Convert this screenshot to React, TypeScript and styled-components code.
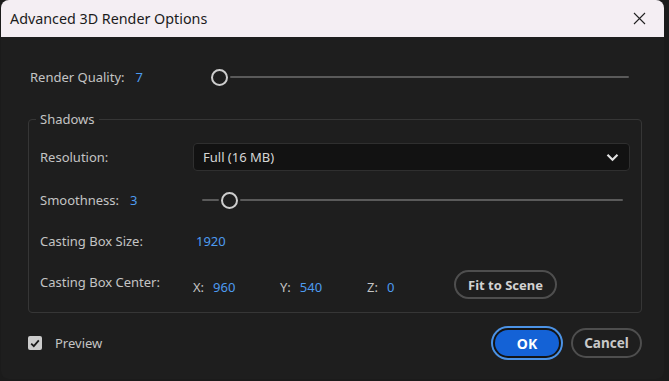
import styled, { createGlobalStyle } from "styled-components";

const GlobalStyle = createGlobalStyle`
  html, body {
    margin: 0;
    background: #1b1b1b;
  }
  * {
    box-sizing: border-box;
  }
`;

const Window = styled.div`
  width: 663px;
  height: 379px;
  margin-left: 1px;
  border-radius: 8px;
  overflow: hidden;
  background: #1e1e1e;
  display: flex;
  flex-direction: column;
  font-family: "Noto Sans", "Open Sans", sans-serif;
`;

const TitleBar = styled.div`
  height: 37px;
  flex-shrink: 0;
  background: #f4eef3;
  display: flex;
  align-items: center;
  justify-content: space-between;
  padding: 0 18px 0 9px;
`;

const Title = styled.span`
  font-size: 14.3px;
  color: #1b1b1b;
`;

const CloseButton = styled.button`
  border: 0;
  background: none;
  padding: 0;
  display: flex;
  color: #222;
`;

const Body = styled.div`
  flex: 1;
  display: flex;
  flex-direction: column;
  padding: 30px 22px 0 27px;
`;

const Label = styled.span`
  font-size: 13px;
  color: #c4c4c4;
  white-space: nowrap;
`;

const Value = styled.span`
  font-size: 13px;
  color: #4d9bf0;
`;

const TopRow = styled.div`
  display: flex;
  align-items: center;
  height: 20px;
`;

const LabelCell = styled.div<{ $w: number; $pl?: number; $gap?: number }>`
  width: ${(p) => p.$w}px;
  flex-shrink: 0;
  display: flex;
  align-items: center;
  gap: ${(p) => p.$gap ?? 10}px;
  padding-left: ${(p) => p.$pl ?? 0}px;
`;

const SliderBox = styled.div<{ $mr?: number }>`
  flex: 1;
  display: flex;
  align-items: center;
  gap: 2px;
  margin-right: ${(p) => p.$mr ?? 0}px;
`;

const Track = styled.div<{ $w?: number }>`
  height: 2px;
  background: #5a5a5a;
  border-radius: 1px;
  ${(p) => (p.$w !== undefined ? `width: ${p.$w}px;` : "flex: 1;")}
`;

const Thumb = styled.div`
  width: 17px;
  height: 17px;
  border-radius: 50%;
  border: 2px solid #cdcdcd;
  background: #1e1e1e;
  flex-shrink: 0;
`;

const Group = styled.fieldset`
  margin: 23px 0 0;
  border: 1px solid #363636;
  border-radius: 4px;
  padding: 15px 11px 13px 11px;
  display: grid;
  grid-template-columns: 153px 1fr;
  align-items: center;
`;

const Legend = styled.legend`
  font-size: 13px;
  color: #c4c4c4;
  padding: 0 4px;
  margin-left: -4px;
`;

const RowLabel = styled(LabelCell)<{ $mt: number; $top?: boolean }>`
  margin-top: ${(p) => p.$mt}px;
  ${(p) => (p.$top ? "align-self: start; padding-top: 3px;" : "")}
`;

const RowControl = styled.div<{ $mt: number; $indent?: number }>`
  margin-top: ${(p) => p.$mt}px;
  padding-left: ${(p) => p.$indent ?? 0}px;
  display: flex;
  align-items: center;
`;

const Select = styled.div`
  flex: 1;
  height: 28px;
  background: #121212;
  border: 1px solid #2f2f2f;
  border-radius: 4px;
  display: flex;
  align-items: center;
  justify-content: space-between;
  padding: 0 10px 0 9px;
  font-size: 13px;
  color: #d6d6d6;
`;

const Coords = styled.div`
  display: grid;
  grid-template-columns: 87px 87px 87px auto;
  align-items: center;
`;

const Coord = styled.div`
  display: flex;
  gap: 9px;
  padding-top: 5px;
`;

const PillButton = styled.button`
  height: 29px;
  padding: 0 12px;
  border-radius: 15px;
  border: 2px solid #4e4e4e;
  background: transparent;
  color: #d2d2d2;
  font-family: inherit;
  font-weight: 700;
  font-size: 13px;
`;

const Footer = styled.div`
  margin-top: 13px;
  height: 34px;
  display: flex;
  align-items: center;
  justify-content: space-between;
`;

const CheckRow = styled.label`
  display: flex;
  align-items: center;
  gap: 13px;
`;

const Box = styled.span`
  width: 14px;
  height: 14px;
  border-radius: 2px;
  background: #cccccc;
  display: flex;
  align-items: center;
  justify-content: center;
`;

const Actions = styled.div`
  display: flex;
  align-items: center;
  gap: 12px;
`;

const OkButton = styled.button`
  width: 64px;
  height: 26px;
  border-radius: 13px;
  border: 0;
  background: #1462d6;
  color: #fff;
  font-family: inherit;
  font-weight: 700;
  font-size: 14px;
  box-shadow: 0 0 0 2px #141414, 0 0 0 4px #4c93e6;
`;

const CancelButton = styled(PillButton)`
  width: 71px;
  height: 30px;
  padding: 0;
  font-size: 13.5px;
  color: #c8c8c8;
`;

const Slider = ({ left, mr }: { left: number; mr?: number }) => (
  <SliderBox $mr={mr}>
    {left > 0 && <Track $w={left} />}
    <Thumb />
    <Track />
  </SliderBox>
);

export default function App() {
  return (
    <>
      <GlobalStyle />
      <Window>
        <TitleBar>
          <Title>Advanced 3D Render Options</Title>
          <CloseButton>
            <svg width="13" height="13" viewBox="0 0 13 13">
              <path d="M1 1L12 12M12 1L1 12" stroke="#222" strokeWidth="1.1" />
            </svg>
          </CloseButton>
        </TitleBar>
        <Body>
          <TopRow>
            <LabelCell $w={183} $pl={2} $gap={11}>
              <Label>Render Quality:</Label>
              <Value>7</Value>
            </LabelCell>
            <Slider left={0} mr={13} />
          </TopRow>

          <Group>
            <Legend>Shadows</Legend>

            <RowLabel $w={153} $mt={0}>
              <Label>Resolution:</Label>
            </RowLabel>
            <RowControl $mt={0}>
              <Select>
                <span>Full (16 MB)</span>
                <svg width="13" height="9" viewBox="0 0 13 9">
                  <path d="M1.5 1.8L6.5 6.8L11.5 1.8" fill="none" stroke="#e0e0e0" strokeWidth="2.2" />
                </svg>
              </Select>
            </RowControl>

            <RowLabel $w={153} $mt={20} $gap={11}>
              <Label>Smoothness:</Label>
              <Value>3</Value>
            </RowLabel>
            <RowControl $mt={20} $indent={9}>
              <Slider left={17} mr={7} />
            </RowControl>

            <RowLabel $w={153} $mt={23}>
              <Label>Casting Box Size:</Label>
            </RowLabel>
            <RowControl $mt={23} $indent={3}>
              <Value>1920</Value>
            </RowControl>

            <RowLabel $w={153} $mt={20} $top>
              <Label>Casting Box Center:</Label>
            </RowLabel>
            <RowControl $mt={20}>
              <Coords>
                <Coord>
                  <Label>X:</Label>
                  <Value>960</Value>
                </Coord>
                <Coord>
                  <Label>Y:</Label>
                  <Value>540</Value>
                </Coord>
                <Coord>
                  <Label>Z:</Label>
                  <Value>0</Value>
                </Coord>
                <PillButton>Fit to Scene</PillButton>
              </Coords>
            </RowControl>
          </Group>

          <Footer>
            <CheckRow>
              <Box>
                <svg width="10" height="9" viewBox="0 0 10 9">
                  <path d="M1.2 4.6L3.8 7.2L8.8 1.4" fill="none" stroke="#1a1a1a" strokeWidth="1.8" />
                </svg>
              </Box>
              <Label>Preview</Label>
            </CheckRow>
            <Actions>
              <OkButton>OK</OkButton>
              <CancelButton>Cancel</CancelButton>
            </Actions>
          </Footer>
        </Body>
      </Window>
    </>
  );
}
